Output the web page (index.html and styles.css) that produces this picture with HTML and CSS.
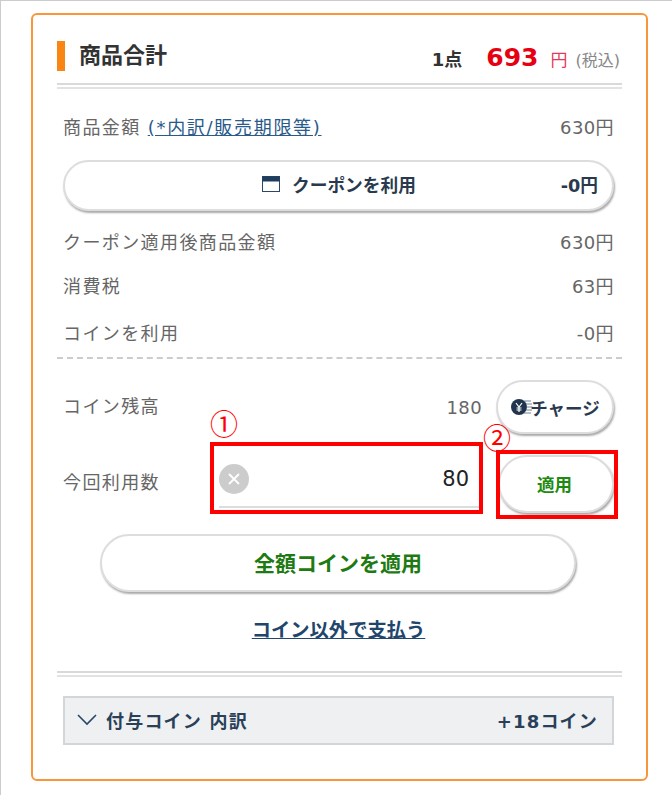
FILE: index.html
```html
<!DOCTYPE html>
<html lang="ja">
<head>
  <meta charset="UTF-8" />
  <title>商品合計</title>
  <link rel="stylesheet" href="styles.css">
</head>
<body>
  <div class="page">
    <div class="card">
      <div class="total-head">
        <h2 class="total-title">商品合計</h2>
        <div class="total-sum">
          <span class="qty">1点</span>
          <span class="price">693</span>
          <span class="yen">円</span>
          <span class="tax">(税込)</span>
        </div>
      </div>
      <div class="double-line"></div>

      <div class="rows">
        <div class="row first">
          <span>商品金額 <a href="#" class="link">(*内訳/販売期限等)</a></span>
          <span>630円</span>
        </div>
        <button class="coupon-btn">
          <span class="coupon-label">
            <svg class="cal-icon" width="18" height="18" viewBox="0 0 18 18">
              <rect x="0.5" y="1.5" width="17" height="15" fill="#fff" stroke="#2a4766" stroke-width="1"/>
              <rect x="0.5" y="1.5" width="17" height="5" fill="#1f3d5c"/>
            </svg>
            クーポンを利用
          </span>
          <span class="coupon-val">-0円</span>
        </button>
        <div class="row after-coupon">
          <span>クーポン適用後商品金額</span>
          <span>630円</span>
        </div>
        <div class="row tax-row">
          <span>消費税</span>
          <span>63円</span>
        </div>
        <div class="row coin-row">
          <span>コインを利用</span>
          <span>-0円</span>
        </div>
      </div>
      <div class="dashed-line"></div>

      <div class="coin-area">
        <div class="balance">
          <span class="balance-label">コイン残高</span>
          <span class="balance-num">180</span>
          <button class="charge-btn">
            <svg class="coin-icon" width="22" height="20" viewBox="0 0 22 20">
              <circle cx="9" cy="10" r="8" fill="#22344d"/>
              <path d="M6 6l3 4 3-4M9 10v5M6.500 11h5M6.500 13h5" fill="none" stroke="#fff" stroke-width="1.200"/>
              <path d="M14 4h7M16 7h6M16.500 10h5.500M16 13h6M14 16h7" stroke="#6f8598" stroke-width="1"/>
            </svg>チャージ
          </button>
        </div>
        <div class="use-row">
          <span class="use-label">今回利用数</span>
          <div class="use-field">
            <span class="clear-btn">
              <svg width="14" height="14" viewBox="0 0 14 14">
                <path d="M2 2l10 10M12 2L2 12" stroke="#fff" stroke-width="1.800"/>
              </svg>
            </span>
            <span class="use-value">80</span>
            <span class="mark-no one">①</span>
            <span class="mark-box"></span>
          </div>
          <div class="apply-wrap">
            <button class="apply-btn">適用</button>
            <span class="mark-no two">②</span>
            <span class="mark-box"></span>
          </div>
        </div>
        <button class="all-btn">全額コインを適用</button>
        <a href="#" class="other-pay">コイン以外で支払う</a>
      </div>
      <div class="double-line"></div>

      <div class="grant">
        <span class="grant-label">
          <svg width="22" height="12" viewBox="0 0 22 12">
            <path d="M2 1l9 9 9-9" fill="none" stroke="#2a4766" stroke-width="1.600"/>
          </svg>
          付与コイン 内訳
        </span>
        <span>+18コイン</span>
      </div>
    </div>
  </div>
</body>
</html>
```

FILE: styles.css
```css
* {
  box-sizing: border-box;
}
body {
  margin: 0;
  font-family: "DejaVu Sans", "Noto Sans CJK JP", sans-serif;
  background: #fff;
  color: #666;
}
.page {
  height: 795px;
  border-top: 1px solid #ccc;
  border-left: 1px solid #ccc;
  padding: 12px 0 0 30px;
}
.card {
  width: 617px;
  height: 768px;
  border: 2px solid #f9963c;
  border-radius: 6px;
  padding: 25px 24px 0 24px;
}
.total-head {
  display: flex;
  justify-content: space-between;
  align-items: center;
  height: 32px;
}
.total-title {
  margin: 0;
  padding-left: 14px;
  border-left: 8px solid #f98613;
  font-size: 22px;
  line-height: 30px;
  font-weight: bold;
  color: #333;
}
.total-sum {
  display: flex;
  align-items: baseline;
  padding: 2px 2px 0 0;
}
.qty {
  font-size: 18px;
  font-weight: bold;
  color: #333;
  margin-right: 24px;
}
.price {
  font-size: 25px;
  font-weight: bold;
  color: #e60012;
  margin-right: 12px;
}
.yen {
  font-size: 17px;
  color: #e6395a;
  margin-right: 8px;
}
.tax {
  font-size: 16px;
  color: #888;
}
.double-line {
  height: 6px;
  margin-top: 11px;
  border-top: 2px solid #d9d9d9;
  border-bottom: 2px solid #e2e2e2;
}
.rows {
  padding: 0 8px 0 6px;
}
.row {
  display: flex;
  justify-content: space-between;
  align-items: center;
  font-size: 18px;
  line-height: 24px;
  letter-spacing: 1.400px;
}
.row span:last-child {
  letter-spacing: 0.4px;
}
.row.first {
  margin-top: 27px;
}
.link {
  color: #2a5a8a;
  letter-spacing: 1.700px;
  text-decoration: underline;
}
.coupon-btn {
  display: flex;
  align-items: center;
  justify-content: space-between;
  width: 100%;
  height: 51px;
  margin-top: 20px;
  padding: 0 14px 3px 197px;
  background: #fff;
  border: 2px solid #ddd;
  border-radius: 26px;
  box-shadow: 1px 2px 2px #aaa;
  font: inherit;
  font-size: 17.700px;
  font-weight: bold;
  color: #2a3a4e;
}
.coupon-label {
  display: flex;
  align-items: center;
  gap: 12px;
}
.after-coupon {
  margin-top: 20px;
}
.tax-row {
  margin-top: 20px;
}
.coin-row {
  margin-top: 23px;
}
.dashed-line {
  margin-top: 11px;
  border-top: 2px dashed #ccc;
}
.coin-area {
  padding: 21px 8px 0 6px;
  font-size: 18px;
  letter-spacing: 1.400px;
  display: flex;
  flex-direction: column;
}
.balance {
  display: flex;
  align-items: center;
  height: 54px;
}
.balance-label {
  padding-bottom: 4px;
}
.balance-num {
  margin-left: auto;
  margin-right: 14px;
  letter-spacing: 0.4px;
}
.charge-btn {
  display: flex;
  align-items: center;
  justify-content: center;
  width: 118px;
  height: 54px;
  padding: 0;
  background: #fff;
  border: 2px solid #ddd;
  border-radius: 27px;
  box-shadow: 1px 2px 2px #aaa;
  font: inherit;
  font-size: 17.500px;
  letter-spacing: 0;
  font-weight: bold;
  color: #2a3a4e;
}
.coin-icon {
  margin-right: -2px;
}
.use-row {
  display: flex;
  align-items: center;
  margin-top: 16px;
  height: 60px;
}
.use-label {
  width: 156px;
  padding-top: 2px;
}
.use-field {
  position: relative;
  display: flex;
  align-items: center;
  justify-content: space-between;
  width: 260px;
  height: 56px;
  padding: 0 10px 0 0;
  border-bottom: 2px solid #ddd;
}
.clear-btn {
  display: flex;
  align-items: center;
  justify-content: center;
  width: 30px;
  height: 30px;
  border-radius: 50%;
  background: #ccc;
}
.use-value {
  font-size: 21px;
  letter-spacing: 0;
  color: #222;
}
.apply-wrap {
  position: relative;
  margin-left: auto;
  margin-top: 8px;
}
.apply-btn {
  display: block;
  width: 116px;
  height: 58px;
  padding: 0 3px 2px 0;
  background: #fff;
  border: 2px solid #ddd;
  border-radius: 29px;
  box-shadow: 1px 2px 2px #aaa;
  font: inherit;
  font-size: 17.500px;
  letter-spacing: 0;
  font-weight: bold;
  color: #1e8a12;
}
.mark-box {
  position: absolute;
  border: 4px solid #f00;
}
.use-field .mark-box {
  left: -9px;
  top: -10px;
  width: 273px;
  height: 72px;
}
.apply-wrap .mark-box {
  left: -2px;
  top: -5px;
  width: 122px;
  height: 69px;
}
.mark-no {
  position: absolute;
  font-family: "Noto Sans CJK JP", sans-serif;
  font-size: 28px;
  line-height: 28px;
  letter-spacing: 0;
  color: #f00;
}
.mark-no.one {
  left: -9px;
  top: -43px;
}
.mark-no.two {
  left: -15px;
  top: -32px;
}
.all-btn {
  align-self: flex-start;
  width: 476px;
  height: 58px;
  margin: 24px 0 0 37px;
  padding: 0 0 2px;
  background: #fff;
  border: 2px solid #ddd;
  border-radius: 29px;
  box-shadow: 1px 2px 2px #aaa;
  font: inherit;
  font-size: 21px;
  letter-spacing: 0;
  font-weight: bold;
  color: #1e7a12;
}
.other-pay {
  align-self: center;
  margin-top: 25px;
  font-size: 19.300px;
  letter-spacing: 0;
  line-height: 28px;
  font-weight: bold;
  color: #21456b;
  text-decoration: underline;
}
.coin-area + .double-line {
  margin-top: 26px;
}
.grant {
  display: flex;
  justify-content: space-between;
  align-items: center;
  height: 49px;
  margin: 19px 8px 0 6px;
  padding: 0 14px 2px 11px;
  background: #eef0f2;
  border: 2px solid #d3d6d8;
  font-size: 18px;
  letter-spacing: 1.200px;
  font-weight: bold;
  color: #2a3f58;
}
.grant-label {
  display: flex;
  align-items: center;
  gap: 8px;
}
```
